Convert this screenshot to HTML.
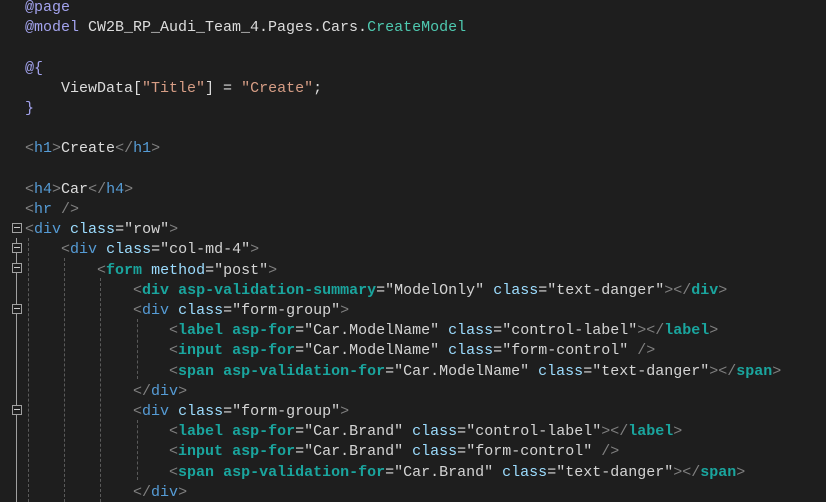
<!DOCTYPE html>
<html><head><meta charset="utf-8"><style>
html,body{margin:0;padding:0;background:#1e1e1e;width:826px;height:502px;overflow:hidden;position:relative}
pre{position:absolute;left:25px;top:-2px;margin:0;font-family:"Liberation Mono",monospace;font-size:15px;line-height:20.2px;color:#dcdcdc;white-space:pre}
.r{color:#a3a3ee}.s{color:#d69d85}.t{color:#4ec9b0}.g{color:#808080}.b{color:#569cd6}.a{color:#9cdcfe}.h{color:#1aa59e;font-weight:bold}.v{color:#d4d4d4}
.fb{position:absolute;left:12px;width:10px;height:10px;border:1px solid #a0a0a0;background:#1e1e1e;box-sizing:border-box}
.fb:after{content:"";position:absolute;left:1px;top:3px;width:6px;height:1px;background:#c8c8c8}
.vl{position:absolute;left:16px;width:1px;background:#a0a0a0}
.ig{position:absolute;width:0;border-left:1px dashed #5a5a5a}
</style></head><body>
<div class="vl" style="top:238px;height:264px"></div>
<div class="fb" style="top:223px"></div>
<div class="fb" style="top:243px"></div>
<div class="fb" style="top:263px"></div>
<div class="fb" style="top:304px"></div>
<div class="fb" style="top:405px"></div>
<div class="ig" style="left:28px;top:238px;height:264px"></div>
<div class="ig" style="left:64px;top:258px;height:244px"></div>
<div class="ig" style="left:100px;top:278px;height:224px"></div>
<div class="ig" style="left:137px;top:319px;height:60px"></div>
<div class="ig" style="left:137px;top:420px;height:60px"></div>
<pre><span class="r">@page</span>
<span class="r">@model</span> CW2B_RP_Audi_Team_4.Pages.Cars.<span class="t">CreateModel</span>

<span class="r">@{</span>
    ViewData[<span class="s">"Title"</span>] = <span class="s">"Create"</span>;
<span class="r">}</span>

<span class="g">&lt;</span><span class="b">h1</span><span class="g">&gt;</span>Create<span class="g">&lt;/</span><span class="b">h1</span><span class="g">&gt;</span>

<span class="g">&lt;</span><span class="b">h4</span><span class="g">&gt;</span>Car<span class="g">&lt;/</span><span class="b">h4</span><span class="g">&gt;</span>
<span class="g">&lt;</span><span class="b">hr</span> <span class="g">/&gt;</span>
<span class="g">&lt;</span><span class="b">div</span> <span class="a">class</span>=<span class="v">"row"</span><span class="g">&gt;</span>
    <span class="g">&lt;</span><span class="b">div</span> <span class="a">class</span>=<span class="v">"col-md-4"</span><span class="g">&gt;</span>
        <span class="g">&lt;</span><span class="h">form</span> <span class="a">method</span>=<span class="v">"post"</span><span class="g">&gt;</span>
            <span class="g">&lt;</span><span class="h">div</span> <span class="h">asp-validation-summary</span>=<span class="v">"ModelOnly"</span> <span class="a">class</span>=<span class="v">"text-danger"</span><span class="g">&gt;&lt;/</span><span class="h">div</span><span class="g">&gt;</span>
            <span class="g">&lt;</span><span class="b">div</span> <span class="a">class</span>=<span class="v">"form-group"</span><span class="g">&gt;</span>
                <span class="g">&lt;</span><span class="h">label</span> <span class="h">asp-for</span>=<span class="v">"Car.ModelName"</span> <span class="a">class</span>=<span class="v">"control-label"</span><span class="g">&gt;&lt;/</span><span class="h">label</span><span class="g">&gt;</span>
                <span class="g">&lt;</span><span class="h">input</span> <span class="h">asp-for</span>=<span class="v">"Car.ModelName"</span> <span class="a">class</span>=<span class="v">"form-control"</span> <span class="g">/&gt;</span>
                <span class="g">&lt;</span><span class="h">span</span> <span class="h">asp-validation-for</span>=<span class="v">"Car.ModelName"</span> <span class="a">class</span>=<span class="v">"text-danger"</span><span class="g">&gt;&lt;/</span><span class="h">span</span><span class="g">&gt;</span>
            <span class="g">&lt;/</span><span class="b">div</span><span class="g">&gt;</span>
            <span class="g">&lt;</span><span class="b">div</span> <span class="a">class</span>=<span class="v">"form-group"</span><span class="g">&gt;</span>
                <span class="g">&lt;</span><span class="h">label</span> <span class="h">asp-for</span>=<span class="v">"Car.Brand"</span> <span class="a">class</span>=<span class="v">"control-label"</span><span class="g">&gt;&lt;/</span><span class="h">label</span><span class="g">&gt;</span>
                <span class="g">&lt;</span><span class="h">input</span> <span class="h">asp-for</span>=<span class="v">"Car.Brand"</span> <span class="a">class</span>=<span class="v">"form-control"</span> <span class="g">/&gt;</span>
                <span class="g">&lt;</span><span class="h">span</span> <span class="h">asp-validation-for</span>=<span class="v">"Car.Brand"</span> <span class="a">class</span>=<span class="v">"text-danger"</span><span class="g">&gt;&lt;/</span><span class="h">span</span><span class="g">&gt;</span>
            <span class="g">&lt;/</span><span class="b">div</span><span class="g">&gt;</span></pre>
</body></html>
